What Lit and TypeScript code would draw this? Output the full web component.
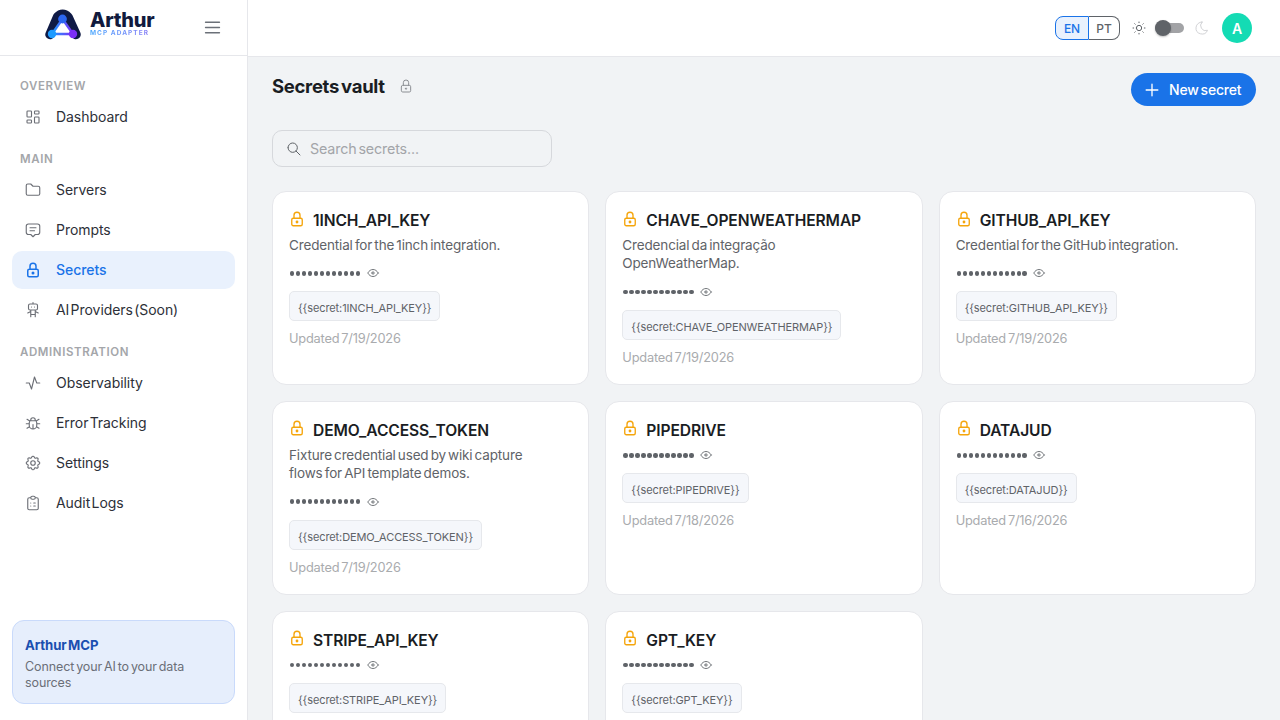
import { LitElement, html, css, svg } from "lit";
import { customElement } from "lit/decorators.js";

const ICONS: Record<string, any> = {
  dashboard: svg`<path d="M5 4h4a1 1 0 0 1 1 1v6a1 1 0 0 1 -1 1h-4a1 1 0 0 1 -1 -1v-6a1 1 0 0 1 1 -1M5 16h4a1 1 0 0 1 1 1v2a1 1 0 0 1 -1 1h-4a1 1 0 0 1 -1 -1v-2a1 1 0 0 1 1 -1M15 12h4a1 1 0 0 1 1 1v6a1 1 0 0 1 -1 1h-4a1 1 0 0 1 -1 -1v-6a1 1 0 0 1 1 -1M15 4h4a1 1 0 0 1 1 1v2a1 1 0 0 1 -1 1h-4a1 1 0 0 1 -1 -1v-2a1 1 0 0 1 1 -1"/>`,
  folder: svg`<path d="M5 4h4l3 3h7a2 2 0 0 1 2 2v8a2 2 0 0 1 -2 2h-14a2 2 0 0 1 -2 -2v-11a2 2 0 0 1 2 -2"/>`,
  message: svg`<path d="M8 9h8M8 13h6M9 18h-3a3 3 0 0 1 -3 -3v-8a3 3 0 0 1 3 -3h12a3 3 0 0 1 3 3v8a3 3 0 0 1 -3 3h-3l-3 3l-3 -3z"/>`,
  lock: svg`<path d="M5 13a2 2 0 0 1 2 -2h10a2 2 0 0 1 2 2v6a2 2 0 0 1 -2 2h-10a2 2 0 0 1 -2 -2zM11 16a1 1 0 1 0 2 0a1 1 0 0 0 -2 0M8 11v-4a4 4 0 1 1 8 0v4"/>`,
  robot: svg`<path d="M6 6a2 2 0 0 1 2 -2h8a2 2 0 0 1 2 2v4a2 2 0 0 1 -2 2h-8a2 2 0 0 1 -2 -2zM12 2v2M9 12v9M15 12v9M5 16l4 -2M15 14l4 2M9 18h6M10 8v.01M14 8v.01"/>`,
  activity: svg`<path d="M3 12h4l3 8l4 -16l3 8h4"/>`,
  bug: svg`<path d="M9 9v-1a3 3 0 0 1 6 0v1M8 9h8a6 6 0 0 1 1 3v3a5 5 0 0 1 -10 0v-3a6 6 0 0 1 1 -3M3 13h4M17 13h4M12 20v-6M4 19l3.35 -2M20 19l-3.35 -2M4 7l3.75 2.4M20 7l-3.75 2.4"/>`,
  settings: svg`<path d="M10.325 4.317c.426 -1.756 2.924 -1.756 3.35 0a1.724 1.724 0 0 0 2.573 1.066c1.543 -.94 3.31 .826 2.37 2.37a1.724 1.724 0 0 0 1.065 2.572c1.756 .426 1.756 2.924 0 3.35a1.724 1.724 0 0 0 -1.066 2.573c.94 1.543 -.826 3.31 -2.37 2.37a1.724 1.724 0 0 0 -2.572 1.065c-.426 1.756 -2.924 1.756 -3.35 0a1.724 1.724 0 0 0 -2.573 -1.066c-1.543 .94 -3.31 -.826 -2.37 -2.37a1.724 1.724 0 0 0 -1.065 -2.572c-1.756 -.426 -1.756 -2.924 0 -3.35a1.724 1.724 0 0 0 1.066 -2.573c-.94 -1.543 .826 -3.31 2.37 -2.37c1 .608 2.296 .07 2.572 -1.065z"/><circle cx="12" cy="12" r="3"/>`,
  clipboard: svg`<path d="M9 5h-2a2 2 0 0 0 -2 2v12a2 2 0 0 0 2 2h10a2 2 0 0 0 2 -2v-12a2 2 0 0 0 -2 -2h-2M9 5a2 2 0 0 1 2 -2h2a2 2 0 0 1 2 2a2 2 0 0 1 -2 2h-2a2 2 0 0 1 -2 -2zM9 12h.01M13 12h2M9 16h.01M13 16h2"/>`,
  eye: svg`<path d="M10 12a2 2 0 1 0 4 0a2 2 0 0 0 -4 0M21 12c-2.4 4 -5.4 6 -9 6c-3.6 0 -6.6 -2 -9 -6c2.4 -4 5.4 -6 9 -6c3.6 0 6.6 2 9 6"/>`,
  search: svg`<path d="M3 10a7 7 0 1 0 14 0a7 7 0 1 0 -14 0M21 21l-6 -6"/>`,
  plus: svg`<path d="M12 5v14M5 12h14"/>`,
  sun: svg`<path d="M8 12a4 4 0 1 0 8 0a4 4 0 1 0 -8 0M3 12h1M12 3v1M20 12h1M12 20v1M5.6 5.6l.7 .7M18.4 5.6l-.7 .7M17.7 17.7l.7 .7M6.3 17.7l-.7 .7"/>`,
  moon: svg`<path d="M12 3c.132 0 .263 0 .393 0a7.5 7.5 0 0 0 7.92 12.446a9 9 0 1 1 -8.313 -12.454z"/>`,
  menu: svg`<path d="M4 6h16M4 12h16M4 18h16"/>`,
};

function icon(name: string, cls = "") {
  return html`<svg class="ic ${cls}" viewBox="0 0 24 24" fill="none" stroke="currentColor" stroke-linecap="round" stroke-linejoin="round">${ICONS[name]}</svg>`;
}

const NAV = [
  { label: "OVERVIEW", items: [["dashboard", "Dashboard"]] },
  { label: "MAIN", items: [["folder", "Servers"], ["message", "Prompts"], ["lock", "Secrets"], ["robot", "AI Providers (Soon)"]] },
  { label: "ADMINISTRATION", items: [["activity", "Observability"], ["bug", "Error Tracking"], ["settings", "Settings"], ["clipboard", "Audit Logs"]] },
];

const SECRETS: { name: string; desc?: string; date: string }[] = [
  { name: "1INCH_API_KEY", desc: "Credential for the 1inch integration.", date: "7/19/2026" },
  { name: "CHAVE_OPENWEATHERMAP", desc: "Credencial da integração OpenWeatherMap.", date: "7/19/2026" },
  { name: "GITHUB_API_KEY", desc: "Credential for the GitHub integration.", date: "7/19/2026" },
  { name: "DEMO_ACCESS_TOKEN", desc: "Fixture credential used by wiki capture flows for API template demos.", date: "7/19/2026" },
  { name: "PIPEDRIVE", date: "7/18/2026" },
  { name: "DATAJUD", date: "7/16/2026" },
  { name: "STRIPE_API_KEY", date: "7/16/2026" },
  { name: "GPT_KEY", date: "7/16/2026" },
];

@customElement("app-root")
export class AppRoot extends LitElement {
  static styles = css`
    :host { display: flex; width: 1280px; height: 720px; overflow: hidden; background: #f1f3f5; color: #1a1d23;
      font-family: Inter, "Noto Sans", sans-serif; word-spacing: -1.5px; letter-spacing: -0.1px; }
    * { box-sizing: border-box; }
    .ic { display: block; width: 18px; height: 18px; stroke-width: 1.5; flex: none; }
    .sidebar { width: 248px; flex: none; background: #fff; border-right: 1px solid #e6e7eb; display: flex; flex-direction: column; height: 720px; }
    .brand { height: 56px; flex: none; border-bottom: 1px solid #e6e7eb; display: flex; align-items: center; padding: 0 24px 0 44px; }
    .mark { width: 38px; height: 32px; flex: none; margin-top: -8px; }
    .brandtext { margin-left: 8px; display: flex; flex-direction: column; margin-top: -10px; }
    .arthur { font-size: 20px; line-height: 19px; font-weight: 800; color: #111a3d; letter-spacing: -0.2px; padding-top: 2px; }
    .adapter { font-size: 6.5px; line-height: 7px; font-weight: 700; letter-spacing: 1.05px; word-spacing: 0; white-space: nowrap;
      background: linear-gradient(90deg, #4aa8ff, #8f7bf5); -webkit-background-clip: text; background-clip: text; color: transparent; }
    .menu { margin-left: auto; width: 21px; height: 21px; color: #6b7078; stroke-width: 1.5; }
    .nav { flex: 1; padding: 0 12px; display: flex; flex-direction: column; }
    .section { font-size: 11.5px; line-height: 16px; font-weight: 600; letter-spacing: .6px; color: #a4a6aa; padding: 0 8px; margin-top: 13px; margin-bottom: 4px; word-spacing: 0; }
    .section.first { margin-top: 22px; }
    .item { height: 38px; border-radius: 10px; display: flex; align-items: center; padding-left: 12px; gap: 14px; font-size: 14px; letter-spacing: -0.05px; word-spacing: -2.6px; font-weight: 400; color: #2d3038; margin-bottom: 2px; }
    .item span { padding-bottom: 2px; }
    .item .ic { color: #6c6f76; }
    .item.active { background: #e9f1fd; color: #1a73e8; font-weight: 500; }
    .item.active .ic { color: #1a73e8; stroke-width: 2; }
    .promo { margin: 0 12px 16px; background: #e6eefc; border: 1px solid #c9dafb; border-radius: 12px; padding: 13px 12px 12px; height: 84px; }
    .promo b { display: block; font-size: 13.2px; line-height: 22px; font-weight: 700; color: #1a4fb0; word-spacing: -1.5px; }
    .promo p { margin: 3px 0 0; font-size: 12.5px; line-height: 16px; color: #6b6f78; }
    .right { flex: 1; min-width: 0; display: flex; flex-direction: column; }
    .top { height: 57px; flex: none; background: #fff; border-bottom: 1px solid #e6e7eb; display: flex; align-items: center; padding: 0 28px 0 0; justify-content: flex-end; }
    .lang { display: flex; height: 24px; font-size: 12px; font-weight: 500; word-spacing: 0; }
    .lang span { width: 31px; display: flex; align-items: center; justify-content: center; color: #5f6368; border: 1px solid #5f6368; border-left: 0; border-radius: 0 8px 8px 0; }
    .lang span.on { width: 34px; background: #e9f1fd; color: #1a73e8; border: 1px solid #1a73e8; border-radius: 8px 0 0 8px; }
    .sun { width: 16px; height: 16px; margin-left: 11px; color: #5f6368; }
    .toggle { position: relative; width: 29px; height: 10px; background: #a2a3a6; border-radius: 5px; margin-left: 8px; margin-right: 10px; }
    .toggle i { position: absolute; left: 0; top: -3px; width: 16px; height: 16px; border-radius: 50%; background: #5f6368; box-shadow: 0 1px 2px rgba(0,0,0,.25); }
    .moon { width: 16px; height: 16px; color: #d2d3d6; }
    .avatar { width: 30px; height: 30px; margin-left: 12px; border-radius: 50%; background: #14dbb4; color: #fff; font-size: 14px; font-weight: 600; display: flex; align-items: center; justify-content: center; }
    .content { flex: 1; min-height: 0; overflow: hidden; padding: 16px 24px 0; }
    .head { display: flex; align-items: flex-start; justify-content: space-between; height: 57px; }
    .titlewrap { display: flex; align-items: center; gap: 13px; height: 26px; }
    h1 { margin: 0; font-size: 18.5px; line-height: 27px; font-weight: 700; color: #1a1d23; letter-spacing: -0.3px; word-spacing: -2px; }
    .titlelock { width: 16px; height: 16px; color: #8b8e93; }
    .newbtn { display: flex; align-items: center; gap: 7px; width: 125px; height: 33px; padding-left: 11px; border-radius: 17px; background: #1a73e8; color: #fff; font-size: 14px; font-weight: 500; letter-spacing: -0.2px; word-spacing: -1.5px; }
    .newbtn .ic { width: 20px; height: 20px; stroke-width: 1.6; }
    .search { width: 280px; height: 37px; border: 1px solid #d6d8dc; border-radius: 10px; display: flex; align-items: center; gap: 8px; padding-left: 13px; color: #a3a5a9; font-size: 14.3px; letter-spacing: -0.15px; word-spacing: -2px; }
    .search .ic { width: 16px; height: 16px; color: #5f6368; }
    .grid { margin-top: 24px; display: grid; grid-template-columns: repeat(3, 1fr); gap: 16px; }
    .card { background: #fff; border: 1px solid #e6e7eb; border-radius: 14px; padding: 16px 16px 17px; }
    .cardhead { display: flex; gap: 7px; align-items: flex-start; height: 25px; }
    .cardlock { width: 18px; height: 18px; color: #f5a50b; margin-top: 1.5px; margin-left: -1px; stroke-width: 1.8; }
    .name { font-size: 15.6px; line-height: 25px; font-weight: 600; color: #1a1d23; letter-spacing: -0.1px; word-spacing: 0; }
    .desc { margin: 3px 0 10px; font-size: 13.5px; line-height: 18.4px; color: #5f6368; max-width: 250px; letter-spacing: -0.15px; word-spacing: -1.5px; }
    .dots { display: flex; align-items: center; gap: 5.6px; margin-top: 3.5px; height: 18px; color: #5f6368; padding-left: 1px; }
    .dots .d { display: flex; gap: 1.6px; }
    .dots .d i { width: 4.4px; height: 4.4px; border-radius: 50%; background: #5f6368; display: block; }
    .dots .ic { width: 14px; height: 14px; }
    .tag { display: inline-flex; align-items: center; height: 30px; margin-top: 9px; padding: 4px 8px 0; background: #f5f7fb; border: 1px solid #e6e8ec; border-radius: 5px; font-size: 11px; color: #5f6368; white-space: nowrap; letter-spacing: -0.1px; word-spacing: 0; vertical-align: top; }
    .updated { font-size: 12.8px; line-height: 18px; margin-top: 9px; color: #a9abae; letter-spacing: -0.2px; word-spacing: -1.5px; }
  `;

  private logo() {
    return html`<svg class="mark" viewBox="0 0 38 32">
      <defs>
        <linearGradient id="tri" x1="0" y1="1" x2="1" y2="1"><stop offset="0" stop-color="#1e9bff"/><stop offset="1" stop-color="#7b2ff7"/></linearGradient>
      </defs>
      <path d="M6 26.5L13.5 9Q18.5 3.5 24 9L32 26.5" fill="none" stroke="#0f1a45" stroke-width="9.5" stroke-linecap="round" stroke-linejoin="round"/>
      <path d="M18.5 11L8 26H29Z" fill="#fff" stroke="url(#tri)" stroke-width="2.4" stroke-linejoin="round"/>
      <circle cx="18.5" cy="11" r="4.4" fill="#2c66f0"/>
      <circle cx="8" cy="26" r="4.2" fill="#1e9bff"/>
      <circle cx="29" cy="26" r="4.2" fill="#7b2ff7"/>
    </svg>`;
  }

  render() {
    return html`
      <aside class="sidebar">
        <div class="brand">
          ${this.logo()}
          <div class="brandtext"><span class="arthur">Arthur</span><span class="adapter">MCP ADAPTER</span></div>
          ${icon("menu", "menu")}
        </div>
        <nav class="nav">
          ${NAV.map((s, i) => html`
            <div class="section ${i === 0 ? "first" : ""}">${s.label}</div>
            ${s.items.map(([ic, t]) => html`<div class="item ${t === "Secrets" ? "active" : ""}">${icon(ic)}<span>${t}</span></div>`)}
          `)}
        </nav>
        <div class="promo"><b>Arthur MCP</b><p>Connect your AI to your data sources</p></div>
      </aside>
      <div class="right">
        <header class="top">
          <div class="lang"><span class="on">EN</span><span>PT</span></div>
          ${icon("sun", "sun")}
          <div class="toggle"><i></i></div>
          ${icon("moon", "moon")}
          <div class="avatar">A</div>
        </header>
        <main class="content">
          <div class="head">
            <div class="titlewrap"><h1>Secrets vault</h1>${icon("lock", "titlelock")}</div>
            <div class="newbtn">${icon("plus")}<span>New secret</span></div>
          </div>
          <div class="search">${icon("search")}<span>Search secrets...</span></div>
          <div class="grid">
            ${SECRETS.map((s) => html`
              <article class="card">
                <div class="cardhead">${icon("lock", "cardlock")}<div class="name">${s.name}</div></div>
                ${s.desc ? html`<p class="desc">${s.desc}</p>` : ""}
                <div class="dots"><span class="d">${Array.from({ length: 12 }, () => html`<i></i>`)}</span>${icon("eye")}</div>
                <div class="tag">{{secret:${s.name}}}</div>
                <div class="updated">Updated ${s.date}</div>
              </article>`)}
          </div>
        </main>
      </div>
    `;
  }
}
